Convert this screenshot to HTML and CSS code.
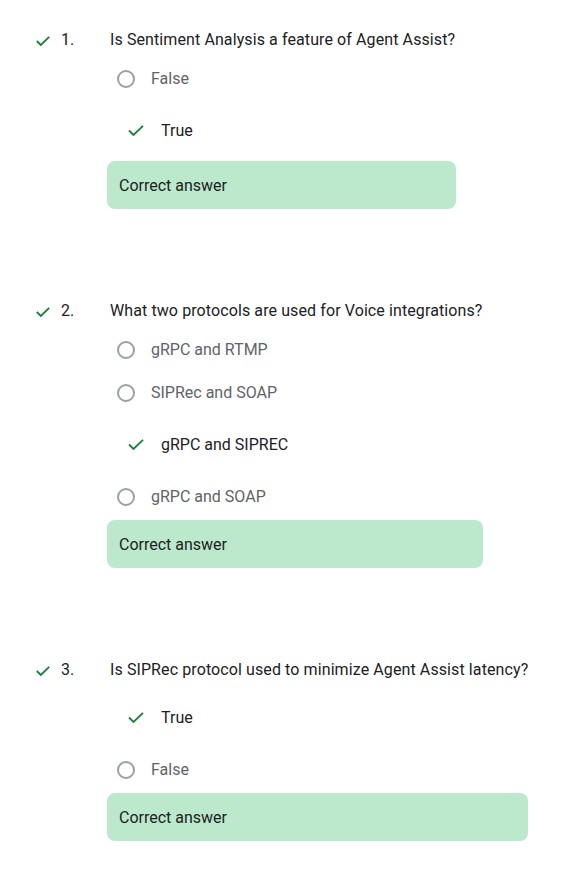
FILE: index.html
```html
<!DOCTYPE html>
<html>
<head>
<meta charset="utf-8">
<link rel="stylesheet" href="styles.css">
</head>
<body>
<div class="quiz">
  <div class="question">
    <div class="q-title">
      <svg class="q-check" viewBox="0 0 14 10"><polyline points="0.8,5 4.8,9 13.2,0.8" /></svg>
      <span class="q-num">1.</span>
      <span class="q-text">Is Sentiment Analysis a feature of Agent Assist?</span>
    </div>
    <div class="options">
      <div class="opt radio"><span class="circle"></span><span class="opt-text">False</span></div>
      <div class="opt checked"><svg class="o-check" viewBox="0 0 16 11"><polyline points="1,5.5 5.5,10 15,0.8" /></svg><span class="opt-text">True</span></div>
    </div>
    <div class="answer w1">Correct answer</div>
  </div>

  <div class="question">
    <div class="q-title">
      <svg class="q-check" viewBox="0 0 14 10"><polyline points="0.8,5 4.8,9 13.2,0.8" /></svg>
      <span class="q-num">2.</span>
      <span class="q-text">What two protocols are used for Voice integrations?</span>
    </div>
    <div class="options">
      <div class="opt radio"><span class="circle"></span><span class="opt-text">gRPC and RTMP</span></div>
      <div class="opt radio"><span class="circle"></span><span class="opt-text">SIPRec and SOAP</span></div>
      <div class="opt checked"><svg class="o-check" viewBox="0 0 16 11"><polyline points="1,5.5 5.5,10 15,0.8" /></svg><span class="opt-text">gRPC and SIPREC</span></div>
      <div class="opt radio"><span class="circle"></span><span class="opt-text">gRPC and SOAP</span></div>
    </div>
    <div class="answer after-radio w2">Correct answer</div>
  </div>

  <div class="question">
    <div class="q-title">
      <svg class="q-check" viewBox="0 0 14 10"><polyline points="0.8,5 4.8,9 13.2,0.8" /></svg>
      <span class="q-num">3.</span>
      <span class="q-text">Is SIPRec protocol used to minimize Agent Assist latency?</span>
    </div>
    <div class="options">
      <div class="opt checked"><svg class="o-check" viewBox="0 0 16 11"><polyline points="1,5.5 5.5,10 15,0.8" /></svg><span class="opt-text">True</span></div>
      <div class="opt radio"><span class="circle"></span><span class="opt-text">False</span></div>
    </div>
    <div class="answer after-radio w3">Correct answer</div>
  </div>
</div>
</body>
</html>
```

FILE: styles.css
```css
html, body {
  margin: 0;
  padding: 0;
  background: #ffffff;
}
body {
  font-family: Roboto, "Liberation Sans", Arial, sans-serif;
  font-size: 16px;
  color: #202124;
}
.quiz {
  padding: 28px 0 0 0;
  display: flex;
  flex-direction: column;
  gap: 90px;
}
.question {
  display: flex;
  flex-direction: column;
}
.q-title {
  display: flex;
  align-items: center;
  height: 24px;
  line-height: 24px;
  padding-left: 36px;
}
.q-check {
  width: 14px;
  height: 10px;
  fill: none;
  stroke: #188038;
  stroke-width: 1.8;
  margin-top: 1px;
}
.q-num {
  margin-left: 11px;
  width: 49px;
}
.q-text {
  white-space: nowrap;
  letter-spacing: 0.1px;
}
.options {
  margin-top: 5px;
  display: flex;
  flex-direction: column;
}
.opt {
  display: flex;
  align-items: center;
  line-height: 24px;
}
.opt.radio {
  height: 43px;
  padding-left: 117px;
  color: #5f6368;
}
.opt.checked {
  height: 61px;
  padding-left: 128px;
  color: #202124;
}
.circle {
  width: 14px;
  height: 14px;
  border: 2px solid #9aa0a6;
  border-radius: 50%;
  margin-right: 16px;
}
.o-check {
  width: 16px;
  height: 11px;
  fill: none;
  stroke: #188038;
  stroke-width: 1.8;
  margin-right: 17px;
}
.answer {
  margin-top: 0;
  margin-left: 107px;
  height: 48px;
  box-sizing: border-box;
  padding-left: 12px;
  display: flex;
  align-items: center;
  background: #bce9cc;
  border-radius: 8px;
  color: #202124;
}
.answer.after-radio {
  margin-top: 2px;
}
.w1 { width: 349px; }
.w2 { width: 376px; }
.w3 { width: 421px; }
```
